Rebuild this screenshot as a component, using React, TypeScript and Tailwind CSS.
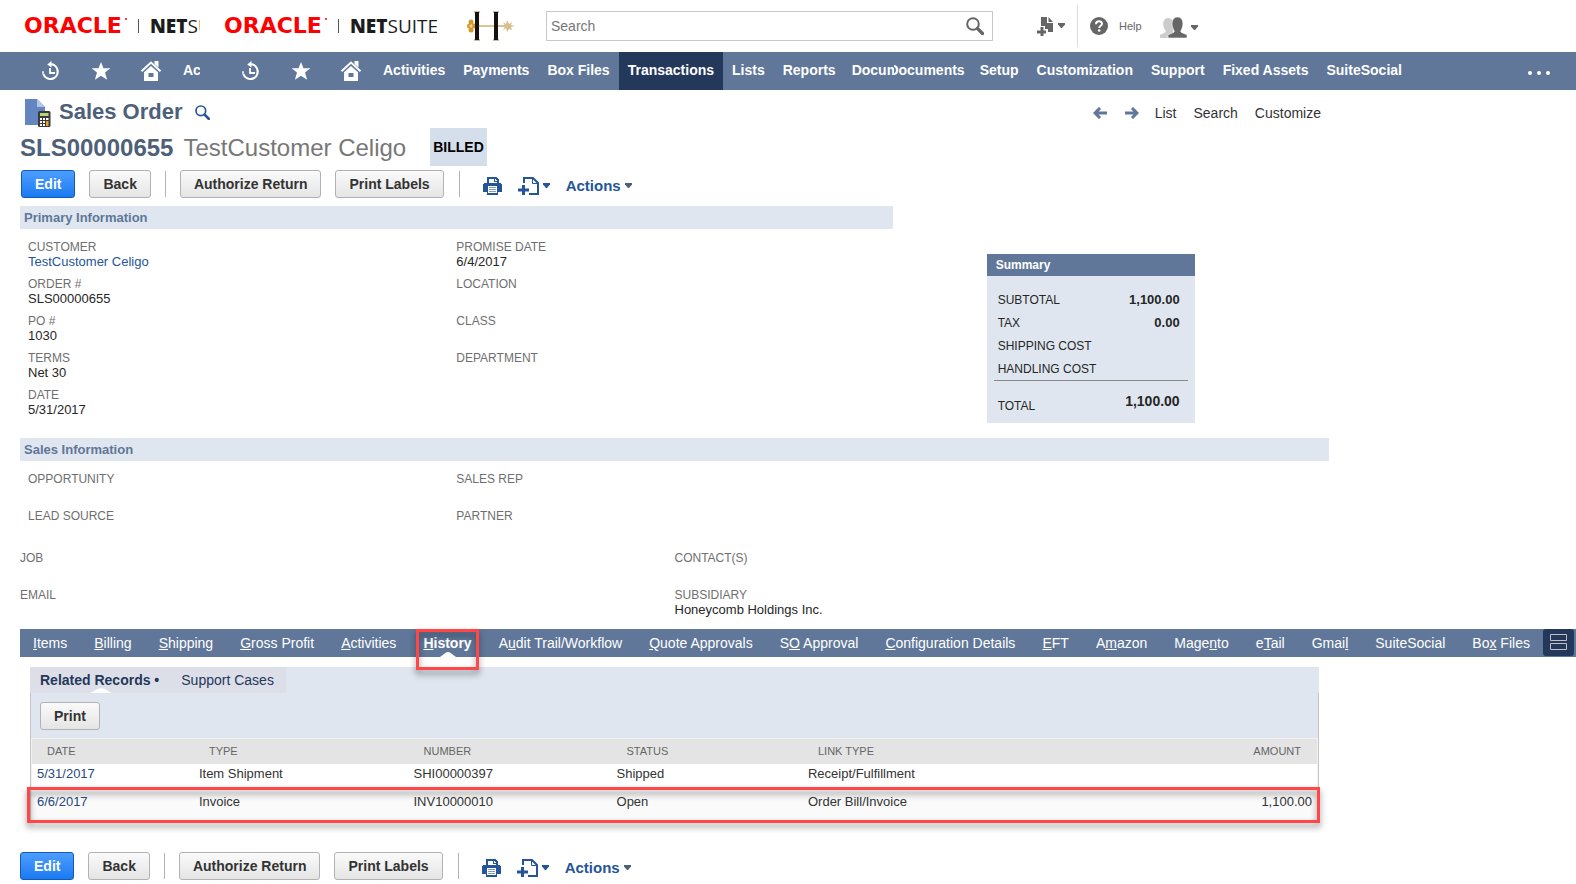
import React from 'react';
import clsx from 'clsx';

const navItems = ['Activities', 'Payments', 'Box Files', 'Transactions', 'Lists', 'Reports'];
const navItemsRight = ['Setup', 'Customization', 'Support', 'Fixed Assets', 'SuiteSocial'];

// "&" marks the access key letter
const tabs = [
  '&Items',
  '&Billing',
  '&Shipping',
  '&Gross Profit',
  '&Activities',
  '&History',
  'A&udit Trail/Workflow',
  '&Quote Approvals',
  'S&O Approval',
  '&Configuration Details',
  '&EFT',
  'A&mazon',
  'Mage&nto',
  'e&Tail',
  'Gmai&l',
  'SuiteSocial',
  'Bo&x Files',
];

const primaryLeft = [
  { label: 'Customer', value: 'TestCustomer Celigo', link: true },
  { label: 'Order #', value: 'SLS00000655' },
  { label: 'PO #', value: '1030' },
  { label: 'Terms', value: 'Net 30' },
  { label: 'Date', value: '5/31/2017' },
];

const primaryRight = [
  { label: 'Promise Date', value: '6/4/2017' },
  { label: 'Location' },
  { label: 'Class' },
  { label: 'Department' },
];

const summary = [
  { label: 'Subtotal', value: '1,100.00' },
  { label: 'Tax', value: '0.00' },
  { label: 'Shipping Cost', value: '' },
  { label: 'Handling Cost', value: '' },
];

const records = [
  { date: '5/31/2017', type: 'Item Shipment', number: 'SHI00000397', status: 'Shipped', link: 'Receipt/Fulfillment', amount: '' },
  { date: '6/6/2017', type: 'Invoice', number: 'INV10000010', status: 'Open', link: 'Order Bill/Invoice', amount: '1,100.00' },
];

function OracleLogo() {
  return (
    <a href="#" aria-label="Oracle NetSuite" className="flex h-full w-[240px] shrink-0 items-center pl-6 whitespace-nowrap">
      <span className="relative w-[107px] shrink-0 font-['DejaVu_Sans'] text-[22px] leading-6 font-bold text-[#ff0000]">
        ORACLE
        <span className="absolute top-1 right-1 size-[2px] rounded-full bg-[#ff0000]" />
      </span>
      <span className="ml-[7px] h-[14px] w-px shrink-0 bg-[#555]" />
      <span className="ml-[11px] shrink-0 font-['Open_Sans'] text-[19px] leading-6 text-[#1c1c1c]">
        <b className="font-extrabold">NET</b>SUITE
      </span>
    </a>
  );
}

function CompanyLogo() {
  return (
    <svg width="48" height="30" viewBox="0 0 48 30" aria-label="Company logo" role="img">
      <path d="M6 15h36" stroke="#d9c594" strokeWidth="2" />
      <g fill="#d59a2c">
        <circle cx="4" cy="11" r="2.5" />
        <circle cx="4" cy="19" r="2.5" />
        <circle cx="2.5" cy="15" r="2.5" />
        <circle cx="7" cy="15" r="2.5" />
      </g>
      <circle cx="4" cy="15" r="1.5" fill="#f3d28a" />
      <path d="M36 11l3 2 1-4 2 4 3-2-1 3 4 1-4 1 1 3-3-1-2 3-1-4-3 2 2-4z" fill="#d6bf8c" />
      <path d="M7 1h6M7 29h6M26 1h6M26 29h6" stroke="#b8a888" strokeWidth="1.5" />
      <path d="M10 1v28M29 1v28" stroke="#17120f" strokeWidth="4" />
    </svg>
  );
}

function Magnifier({ size, color, width = 2 }: { size: number; color: string; width?: number }) {
  return (
    <svg width={size} height={size} viewBox="0 0 18 18" fill="none" stroke={color} aria-hidden="true">
      <circle cx="7" cy="7" r="5.8" strokeWidth={width} />
      <path d="M11.5 11.5l5 5" strokeWidth={width + 1.2} strokeLinecap="round" />
    </svg>
  );
}

function Caret({ className }: { className?: string }) {
  return (
    <svg width="7" height="5" viewBox="0 0 7 5" className={className} fill="currentColor" aria-hidden="true">
      <path d="M0 0h7v1.5L4 5H3L0 1.5z" />
    </svg>
  );
}

function NavIcons() {
  return (
    <div className="flex w-[174px] shrink-0 items-center pl-[41px] text-white">
      <button aria-label="Recent records" className="w-[50px]">
        <svg width="20" height="20" viewBox="0 0 20 20" fill="none" stroke="currentColor">
          <path d="M10 3.2a7.4 7.4 0 1 1-7.6 10" strokeWidth="2.2" />
          <path d="M2 10.2v2.6" strokeWidth="1.6" />
          <path d="M6.2 3.4L10.5 0v6.6z" fill="currentColor" stroke="none" />
          <path d="M9 7v5h5" strokeWidth="1.8" />
        </svg>
      </button>
      <button aria-label="Shortcuts" className="w-[49px]">
        <svg width="20" height="20" viewBox="0 0 20 20" fill="currentColor">
          <path d="M10 1l2.5 6.3H19.4l-5.4 4.3 2.1 7.2L10 14.7l-6.1 4.1L6 11.6.6 7.3h6.9z" />
        </svg>
      </button>
      <button aria-label="Home" className="w-[22px]">
        <svg width="22" height="20" viewBox="0 0 22 20">
          <path d="M1.5 10.2L11 1.6l9.5 8.6" fill="none" stroke="currentColor" strokeWidth="2" />
          <path d="M14.5 0h4v6.5l-4-3.5z" fill="currentColor" />
          <path d="M11 5l7 6.3V20H4v-8.700z" fill="currentColor" />
          <path d="M8.500 12h5v4h-5z" fill="#607799" />
        </svg>
      </button>
    </div>
  );
}

function NavLink({ label }: { label: string }) {
  return (
    <a
      href="#"
      className={clsx('flex h-full items-center px-[9px] pb-[2px] whitespace-nowrap', label === 'Transactions' && 'bg-[#24385b]')}
    >
      {label}
    </a>
  );
}

function Button({ children, primary }: { children: React.ReactNode; primary?: boolean }) {
  return (
    <button
      className={clsx(
        'h-7 rounded-[3px] border px-[13px] text-sm leading-5 font-bold whitespace-nowrap',
        primary
          ? 'border-[#125ab2] bg-linear-to-b from-[#4c9dff] to-[#187bf2] text-white'
          : 'border-[#b2b2b2] bg-linear-to-b from-[#fafafa] to-[#e5e5e5] text-[#333]'
      )}
    >
      {children}
    </button>
  );
}

function Toolbar() {
  return (
    <div className="flex items-center text-[#255599]">
      <div className="flex gap-[14px]">
        <Button primary>Edit</Button>
        <Button>Back</Button>
      </div>
      <span className="mx-[14px] h-[26px] w-px bg-[#b2b2b2]" />
      <div className="flex gap-[14px]">
        <Button>Authorize Return</Button>
        <Button>Print Labels</Button>
      </div>
      <span className="ml-[15px] h-[26px] w-px bg-[#b2b2b2]" />
      <div className="flex items-center pt-[3px] pl-[23px]">
        <button aria-label="Print">
          <svg width="19" height="18" viewBox="0 0 19 18" shapeRendering="crispEdges">
            <path d="M4 0h9l3 3v3H4z" fill="currentColor" />
            <path d="M6 2h5v3h3v1H6z" fill="#fff" />
            <path d="M12 2h1v1h1v1h-2z" fill="#fff" />
            <path d="M1 6h17v1h1v8h-4v3H4v-3H0V7h1z" fill="currentColor" />
            <path d="M5 9h9v7H5z" fill="#fff" />
            <path d="M6 10h7v1H6zM6 12h7v1H6zM6 14h7v1H6z" fill="#7f9cc6" />
          </svg>
        </button>
        <button aria-label="Add" className="ml-4 flex items-center gap-1">
          <svg width="21" height="18" viewBox="0 0 21 18" fill="none" stroke="currentColor">
            <path d="M6 6V1h9l5 5v11h-9" strokeWidth="2" />
            <path d="M14.500 1v5.500H20" strokeWidth="1" />
            <path d="M5.500 8v10M0 13h11" strokeWidth="3" />
          </svg>
          <Caret />
        </button>
        <button className="ml-4 flex items-center gap-1 text-[15px] leading-5 font-bold">
          Actions
          <Caret className="text-[#4d5f79]" />
        </button>
      </div>
    </div>
  );
}

function Field({ label, value, link }: { label: string; value?: string; link?: boolean }) {
  return (
    <div className="h-[37px]">
      <div className="text-xs leading-[14px] text-[#6f6f6f] uppercase">{label}</div>
      {link ? (
        <a href="#" className="block text-[13px] leading-[15px] text-[#255599]">{value}</a>
      ) : (
        <div className="text-[13px] leading-[15px] text-[#262626]">{value}</div>
      )}
    </div>
  );
}

function SectionTitle({ children }: { children: React.ReactNode }) {
  return <h2 className="h-[23px] bg-[#dfe6ef] px-1 text-[13px] leading-[23px] font-bold text-[#607799]">{children}</h2>;
}

function Tab({ label }: { label: string }) {
  const [before, after] = label.includes('&') ? label.split('&') : [label, ''];
  const active = label === '&History';
  return (
    <button className={clsx('relative h-full px-[13px] whitespace-nowrap', active && 'font-bold')}>
      {before}
      {after && <u>{after[0]}</u>}
      {after.slice(1)}
      {active && (
        <>
          <svg width="16" height="5" viewBox="0 0 16 5" className="absolute bottom-0 left-[30px]">
            <path d="M0 5l6-4.500q2-1 4 0L16 5z" fill="#fff" />
          </svg>
          <span className="absolute inset-x-[6px] top-0 h-[41px] border-3 border-[#ff4747] drop-shadow-[0_4px_3px_rgba(0,0,0,0.45)]" />
        </>
      )}
    </button>
  );
}

export default function App() {
  return (
    <div className="min-h-[884px] overflow-x-hidden bg-white font-['Liberation_Sans',Arial,sans-serif] text-[#333]">
      <header>
        <div className="flex h-[52px] items-center">
          <div className="h-full w-[200px] shrink-0 overflow-hidden">
            <OracleLogo />
          </div>
          <div className="h-full w-[267px] shrink-0">
            <OracleLogo />
          </div>
          <CompanyLogo />
          <form className="ml-[31px] flex h-[30px] flex-1 items-center border border-[#c8c8c8] pr-2">
            <input type="text" aria-label="Search" placeholder="Search" className="h-full min-w-0 flex-1 px-1 text-sm outline-none placeholder:text-[#777]" />
            <button type="button" aria-label="Submit search">
              <Magnifier size={18} color="#666" />
            </button>
          </form>
          <div className="flex h-full w-[583px] shrink-0 items-center pl-[44px] text-[#666]">
            <button aria-label="Create new" className="flex items-center gap-1">
              <svg width="17" height="19" viewBox="0 0 17 19" fill="currentColor">
                <path d="M4 0h6v6h6v9h-5v-3H8V9H4z" />
                <path d="M11.500 0l4.500 5h-4.500z" />
                <path d="M3.500 10h3v3.500H9v3H6.500V19h-3v-2.500H0v-3h3.500z" />
              </svg>
              <Caret className="mb-px" />
            </button>
            <span className="ml-3 h-[42px] w-px bg-[#ddd]" />
            <button className="ml-3 flex items-center gap-[11px] text-[11px]">
              <svg width="18" height="18" viewBox="0 0 18 18">
                <circle cx="9" cy="9" r="9" fill="currentColor" />
                <path d="M6 7.200C6 3.200 12 3.400 12 6.800c0 2-2.800 2-2.800 4.200" fill="none" stroke="#fff" strokeWidth="2" />
                <circle cx="9.200" cy="13.500" r="1.300" fill="#fff" />
              </svg>
              Help
            </button>
            <button aria-label="Change role" className="ml-[18px] flex items-center gap-1 pt-[2px]">
              <svg width="27" height="21" viewBox="0 0 27 21">
                <path d="M0 21v-3l5-2.500c1-.6.8-1.500.2-2.500C2 9 2.500 1 8 1c4 0 5 3 5 5v15z" fill="#ccc" />
                <path d="M8 21v-3.200l5.500-2.300c1-.6.8-1.500.2-2.500C10.800 8 11.500 0 17.500 0s6.700 8 3.800 13c-.6 1-.8 1.900.2 2.500l5.500 2.300V21z" fill="currentColor" stroke="#fff" strokeWidth="0.600" />
              </svg>
              <Caret />
            </button>
          </div>
        </div>

        <nav className="flex h-[38px] items-center bg-[#607799] text-sm font-bold text-white">
          <div className="flex h-full w-[200px] shrink-0 overflow-hidden">
            <NavIcons />
            <NavLink label="Activities" />
          </div>
          <NavIcons />
          {navItems.map((item) => (
            <NavLink key={item} label={item} />
          ))}
          <a href="#" className="w-[49px] shrink-0 overflow-hidden pb-[2px] pl-[7px]">Documents</a>
          <a href="#" className="mr-[6px] flex w-[71px] shrink-0 justify-end overflow-hidden pb-[2px]">Documents</a>
          {navItemsRight.map((item) => (
            <NavLink key={item} label={item} />
          ))}
          <button aria-label="More" className="mr-[26px] ml-auto flex gap-1 pt-1">
            <span className="size-1 rounded-full bg-white" />
            <span className="mx-px size-1 rounded-full bg-white" />
            <span className="size-1 rounded-full bg-white" />
          </button>
        </nav>
      </header>

      <main className="pt-[9px] pl-5">
        <div className="pr-[247px]">
          <div className="flex h-[29px] items-start">
            <svg width="26" height="29" viewBox="0 0 26 29" className="ml-[5px]">
              <path d="M0 0h12l8 8v18H0z" fill="#6385c1" />
              <path d="M12 0l8 8h-8z" fill="#b4c6e4" />
              <rect x="13" y="12" width="12.500" height="16" rx="1.500" fill="#3a3a3a" />
              <path d="M15 14h8.500v3H15z" fill="#b5d77c" />
              <path d="M15 19h2v2h-2zM18 19h2v2h-2zM15 22h2v2h-2zM18 22h2v2h-2zM15 25h2v2h-2zM18 25h2v2h-2zM21 19h2.500v2H21z" fill="#fff" />
              <path d="M21 22h2.500v5H21z" fill="#f0a030" />
            </svg>
            <h1 className="ml-2 text-[22px] leading-[26px] font-bold text-[#4d5f79]">Sales Order</h1>
            <button aria-label="Find" className="mt-[6px] ml-3">
              <Magnifier size={15} color="#255599" />
            </button>
            <div className="mt-[5px] mr-2 ml-auto flex items-center text-sm leading-[18px]">
              <button aria-label="Previous" className="text-[#607799]">
                <svg width="14" height="12" viewBox="0 0 14 12" fill="none" stroke="currentColor" strokeWidth="3">
                  <path d="M7 1L2 6l5 5M2 6h12" />
                </svg>
              </button>
              <button aria-label="Next" className="mr-4 ml-[18px] text-[#607799]">
                <svg width="14" height="12" viewBox="0 0 14 12" fill="none" stroke="currentColor" strokeWidth="3">
                  <path d="M7 1l5 5-5 5M12 6H0" />
                </svg>
              </button>
              <a href="#">List</a>
              <a href="#" className="mx-[17px]">Search</a>
              <a href="#">Customize</a>
            </div>
          </div>

          <div className="flex h-[38px] items-center text-2xl whitespace-nowrap">
            <span className="pt-[2px] font-bold text-[#4d5f79]">SLS00000655</span>
            <span className="ml-[10px] pt-[2px] text-[#777]">TestCustomer Celigo</span>
            <span className="ml-6 h-full bg-[#d5dfeb] px-[3px] text-sm leading-[38px] font-bold text-black">BILLED</span>
          </div>

          <div className="mt-1 h-7 pl-px">
            <Toolbar />
          </div>

          <div className="mt-2 grid h-[232px] grid-cols-3">
            <section className="col-span-2">
              <SectionTitle>Primary Information</SectionTitle>
              <div className="grid grid-cols-2 pt-[11px]">
                <div className="pl-2">
                  {primaryLeft.map((f) => (
                    <Field key={f.label} {...f} />
                  ))}
                </div>
                <div>
                  {primaryRight.map((f) => (
                    <Field key={f.label} {...f} />
                  ))}
                </div>
              </div>
            </section>
            <aside className="mt-12 ml-[94px] h-[169px] w-[208px] bg-[#dfe6ef] text-xs text-[#262626]">
              <h2 className="h-[22px] bg-[#607799] px-[9px] leading-[22px] font-bold text-white">Summary</h2>
              <dl className="mx-[7px] border-b border-[#888] px-1 pt-3">
                {summary.map((row) => (
                  <div key={row.label} className="flex h-[23px] items-center justify-between pr-1">
                    <dt className="uppercase">{row.label}</dt>
                    <dd className="text-[13px] font-bold">{row.value}</dd>
                  </div>
                ))}
              </dl>
              <dl className="flex items-start justify-between px-[11px] pt-[11px] pr-[15px]">
                <dt className="pt-[5px] leading-[18px] uppercase">Total</dt>
                <dd className="text-sm leading-[18px] font-bold">1,100.00</dd>
              </dl>
            </aside>
          </div>

          <section>
            <SectionTitle>Sales Information</SectionTitle>
            <div className="grid grid-cols-3 pt-[11px]">
              <div className="pl-2">
                <Field label="Opportunity" />
                <Field label="Lead Source" />
              </div>
              <div>
                <Field label="Sales Rep" />
                <Field label="Partner" />
              </div>
            </div>
          </section>

          <section className="mt-[5px] grid h-[78px] grid-cols-2">
            <div>
              <Field label="Job" />
              <Field label="Email" />
            </div>
            <div>
              <Field label="Contact(s)" />
              <Field label="Subsidiary" value="Honeycomb Holdings Inc." />
            </div>
          </section>
        </div>

        <nav className="flex h-7 bg-[#607799] text-sm text-white">
          <div className="flex flex-1 justify-between">
            {tabs.map((t) => (
              <Tab key={t} label={t} />
            ))}
          </div>
          <button aria-label="Toggle unlayered view" className="mr-[2px] flex h-[27px] w-[31px] shrink-0 items-center justify-center rounded-[3px] bg-[#24385b]">
            <svg width="17" height="17" viewBox="0 0 17 17" fill="none" stroke="#c4bfc4" strokeWidth="1">
              <path d="M.5.500h16v6H.500zM.500 9.500h16v6H.500z" />
            </svg>
          </button>
        </nav>

        <div className="pr-[247px]">
          <section className="mx-[10px] mt-[10px]">
            <div className="flex h-[26px] bg-[#dfe6ef] text-sm text-[#24385b]">
              <div className="flex bg-[#dddfe8]">
                <button className="relative pr-[10px] pl-[10px] font-bold">
                  Related Records •
                  <svg width="22" height="5" viewBox="0 0 22 5" className="absolute bottom-0 left-[60px]">
                    <path d="M0 5L8 .800q3-1 6 0L22 5z" fill="#fff" />
                  </svg>
                </button>
                <button className="px-3">Support Cases</button>
              </div>
            </div>
            <div className="border-x border-[#c4c4c4]">
              <div className="flex h-[45px] items-center bg-[#dfe6ef] pl-[9px]">
                <Button>Print</Button>
              </div>
              <div className="relative border-x border-t border-[#f2f2f2]">
                <table className="w-full table-fixed border-collapse text-[13px]">
                  <thead>
                    <tr className="h-[25px] bg-[#e4e4e4] text-left text-[11px] text-[#666] uppercase">
                      <th className="w-[12.6%] pl-[15px] font-normal">Date</th>
                      <th className="w-[16.7%] pl-[15px] font-normal">Type</th>
                      <th className="w-[15.8%] pl-[15px] font-normal">Number</th>
                      <th className="w-[14.9%] pl-[15px] font-normal">Status</th>
                      <th className="pl-[15px] font-normal">Link Type</th>
                      <th className="pr-4 text-right font-normal">Amount</th>
                    </tr>
                  </thead>
                  <tbody>
                    {records.map((r) => (
                      <tr key={r.number} className="h-7 align-top leading-5 even:bg-[#fafafa]">
                        <td className="pl-[5px]">
                          <a href="#" className="text-[#27497f]">{r.date}</a>
                        </td>
                        <td className="pl-[5px]">{r.type}</td>
                        <td className="pl-[5px]">{r.number}</td>
                        <td className="pl-[5px]">{r.status}</td>
                        <td className="pl-[5px]">{r.link}</td>
                        <td className="pr-[5px] text-right">{r.amount}</td>
                      </tr>
                    ))}
                  </tbody>
                </table>
                {/* highlight around the invoice row */}
                <div className="pointer-events-none absolute -right-[3px] -bottom-[3px] -left-[5px] h-9 border-3 border-[#ff4747] drop-shadow-[0_4px_3px_rgba(0,0,0,0.45)]" />
              </div>
            </div>
          </section>

          <div className="mt-8">
            <Toolbar />
          </div>
        </div>
      </main>
    </div>
  );
}
